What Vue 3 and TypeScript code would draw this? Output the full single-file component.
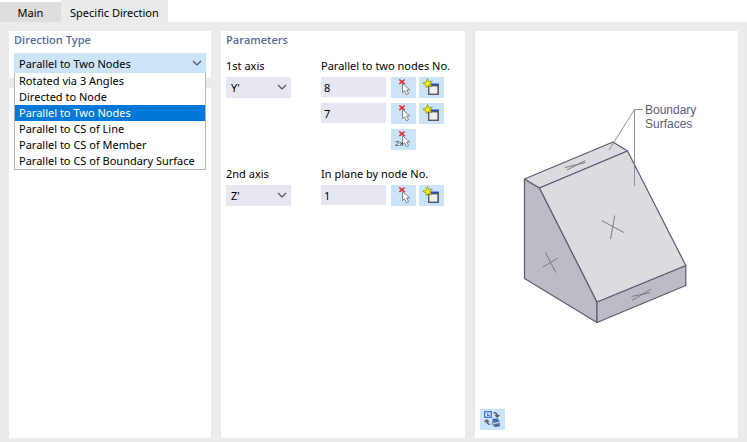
<script setup lang="ts">
import { ref } from 'vue'

interface NodeField {
  id: string
  label: string
  value: string
}

const tabs = ['Main', 'Specific Direction']
const activeTab = ref('Specific Direction')

const directionTypes = [
  'Rotated via 3 Angles',
  'Directed to Node',
  'Parallel to Two Nodes',
  'Parallel to CS of Line',
  'Parallel to CS of Member',
  'Parallel to CS of Boundary Surface',
]
const directionType = ref('Parallel to Two Nodes')
const listOpen = ref(true)

const axes = ["X'", "Y'", "Z'"]
const firstAxis = ref("Y'")
const secondAxis = ref("Z'")

const parallelNodes = ref<NodeField[]>([
  { id: 'node-a', label: 'First node', value: '8' },
  { id: 'node-b', label: 'Second node', value: '7' },
])
const planeNode = ref('1')

function choose(type: string) {
  directionType.value = type
  listOpen.value = false
}
</script>

<template>
  <svg class="symbols" width="0" height="0" aria-hidden="true">
    <symbol id="icon-pick" viewBox="0 0 25 21">
      <path d="M8.3 2.5L13.7 7M13.7 2.5L8.3 7" stroke="#ee1c24" stroke-width="1.5" fill="none" />
      <path d="M11.5 6.5V15.5L13.6 13.7L15.5 17.8L17.6 16.8L15.7 12.9H18.8Z" fill="#fff" stroke="#77777c" stroke-width=".9" />
    </symbol>
    <symbol id="icon-new" viewBox="0 0 25 21">
      <path d="M10 7.5H20" stroke="#2846dc" stroke-width="2" />
      <rect x="9.7" y="8.7" width="9.6" height="8.6" fill="#efefef" stroke="#5a5a5a" stroke-width="1.4" />
      <path d="M19.3 7V17" stroke="#5a5a5a" stroke-width="1.4" />
      <path d="M8.5 1.5L9.6 4.7L13.3 4.1L11 6.6L12.8 9.8L9.4 8.6L7.2 11L6.9 7.7L3.8 6.3L7.1 5.2Z" fill="#f8f000" stroke="#85852c" stroke-width=".7" />
    </symbol>
    <symbol id="icon-chevron" viewBox="0 0 10 6">
      <path d="M1 1L5 5L9 1" fill="none" stroke="#50505a" stroke-width="1.2" />
    </symbol>
  </svg>

  <div class="dialog">
    <div class="tabs" role="tablist">
      <button
        v-for="tab in tabs"
        :key="tab"
        type="button"
        role="tab"
        class="tab"
        :class="{ active: tab === activeTab }"
        :aria-selected="tab === activeTab"
        @click="activeTab = tab"
      >{{ tab }}</button>
    </div>

    <main class="content">
      <div class="column">
        <section class="panel type-panel">
          <h2><label for="direction-type">Direction Type</label></h2>
          <div class="combo">
            <div class="select wide">
              <select id="direction-type" v-model="directionType" @mousedown.prevent="listOpen = !listOpen">
                <option v-for="type in directionTypes" :key="type">{{ type }}</option>
              </select>
              <svg class="chevron"><use href="#icon-chevron" /></svg>
            </div>
            <ul v-if="listOpen" class="options" role="listbox" aria-label="Direction Type">
              <li
                v-for="type in directionTypes"
                :key="type"
                role="option"
                :aria-selected="type === directionType"
                :class="{ selected: type === directionType }"
                @click="choose(type)"
              >{{ type }}</li>
            </ul>
          </div>
        </section>
        <section class="panel grow"></section>
      </div>

      <section class="panel">
        <h2>Parameters</h2>
        <div class="group">
          <div class="axis">
            <label for="first-axis">1st axis</label>
            <div class="select">
              <select id="first-axis" v-model="firstAxis">
                <option v-for="axis in axes" :key="axis">{{ axis }}</option>
              </select>
              <svg class="chevron"><use href="#icon-chevron" /></svg>
            </div>
          </div>
          <div class="nodes">
            <label for="node-a">Parallel to two nodes No.</label>
            <div class="rows">
              <div v-for="node in parallelNodes" :key="node.id" class="row">
                <input :id="node.id" v-model="node.value" type="text" :aria-label="node.label" />
                <button type="button" class="tool" aria-label="Pick node"><svg><use href="#icon-pick" /></svg></button>
                <button type="button" class="tool" aria-label="New node"><svg><use href="#icon-new" /></svg></button>
              </div>
              <div class="row">
                <span class="spacer"></span>
                <button type="button" class="tool" aria-label="Pick two nodes">
                  <svg viewBox="0 0 25 21">
                    <use href="#icon-pick" width="25" height="21" />
                    <text x="4" y="17" class="twice">2x</text>
                  </svg>
                </button>
              </div>
            </div>
          </div>
        </div>
        <div class="group">
          <div class="axis">
            <label for="second-axis">2nd axis</label>
            <div class="select">
              <select id="second-axis" v-model="secondAxis">
                <option v-for="axis in axes" :key="axis">{{ axis }}</option>
              </select>
              <svg class="chevron"><use href="#icon-chevron" /></svg>
            </div>
          </div>
          <div class="nodes">
            <label for="plane-node">In plane by node No.</label>
            <div class="row">
              <input id="plane-node" v-model="planeNode" type="text" />
              <button type="button" class="tool" aria-label="Pick node"><svg><use href="#icon-pick" /></svg></button>
              <button type="button" class="tool" aria-label="New node"><svg><use href="#icon-new" /></svg></button>
            </div>
          </div>
        </div>
      </section>

      <section class="panel preview">
        <svg class="drawing" viewBox="475 31 263 378" role="img" aria-label="Boundary surfaces of a solid">
          <g stroke="#5c5c73" stroke-width="1.2" stroke-linejoin="round">
            <path d="M524.5 179L539.5 188L597 302L597 322.5L524.5 278.5Z" fill="#bcbcc6" />
            <path d="M597 302L685.8 265.5V285.5L597 322.5Z" fill="#bcbcc6" />
            <path d="M524.5 179L613 142L627.5 151L539.5 188Z" fill="#dbdbe0" />
            <path d="M539.5 188L627.5 151L685.8 265.5L597 302Z" fill="#dbdbe0" />
          </g>
          <g fill="none" stroke="#72727e" stroke-width=".9">
            <path d="M601.5 220.5L624 232.5M614.8 215.5L610.5 239" />
            <path d="M545.5 252.5L555.8 272.5M543 267L558 258" />
            <path d="M565 167.5L585.5 162.5M567 170L585.5 160.5" />
            <path d="M631.5 296.5L650.5 292.5M632 300.5L651 289" />
            <path d="M609 150L634.5 109.5H643M634.5 109.5V186" stroke="#85858f" />
          </g>
          <text x="645" y="114" class="callout">Boundary</text>
          <text x="645" y="128" class="callout">Surfaces</text>
        </svg>
        <div class="footer">
          <button type="button" class="tool" aria-label="Switch preview">
            <svg viewBox="0 0 25 21">
              <rect x="4.7" y="2.7" width="6.6" height="5.6" fill="#e4eeff" stroke="#4878e8" stroke-width="1.4" />
              <path d="M7 4.2V7H9.8V5.7H8.3V4.2Z" fill="#4878e8" />
              <path d="M13.5 3.8Q17.3 3.4 17.3 7.5M15.2 6L17.3 8L19.4 6" fill="none" stroke="#555b63" stroke-width="1.3" />
              <path d="M10 15.3Q6.7 15.3 6.7 11.5M4.6 13L6.7 11L8.8 13" fill="none" stroke="#555b63" stroke-width="1.3" />
              <path d="M12.5 9.5L18 10L20 12.5V17L14.5 18L11.5 15.5Z" fill="#8299c4" />
              <path d="M12.5 10L17.8 9.6L18.8 12.8L13.8 13.8Z" fill="#456bb5" />
              <path d="M14.5 15.3L19.7 14.3V17.2L14.5 18Z" fill="#4b6799" />
              <path d="M13 14.5L19.8 13.4" stroke="#c9d8ee" />
            </svg>
          </button>
        </div>
      </section>
    </main>
  </div>
</template>

<style>
body {
  margin: 0;
}
</style>

<style scoped>
.symbols {
  position: absolute;
}
.dialog {
  display: flex;
  flex-direction: column;
  min-height: 100vh;
  background: #fff;
  color: #000;
  font: 11px/16px "Noto Sans", "Open Sans", sans-serif;
}
.tabs {
  display: flex;
  align-items: flex-end;
  height: 22px;
}
button,
input,
select {
  margin: 0;
  border: 0;
  border-radius: 0;
  font: inherit;
  color: inherit;
}
.tab {
  min-width: 61px;
  height: 20px;
  padding: 2px 9px 0;
  background: #dedede;
}
.tab.active {
  height: 22px;
  padding-top: 4px;
  background: #ebebeb;
}
.content {
  flex: 1;
  display: grid;
  grid-template-columns: 202fr 244fr 263fr;
  gap: 10px;
  padding: 9px 9px 8px;
  background: #ebebeb;
}
.column {
  display: flex;
  flex-direction: column;
  gap: 10px;
  min-width: 0;
}
.panel {
  box-sizing: border-box;
  min-width: 0;
  padding: 1px 5px 5px;
  background: #fff;
}
.grow {
  flex: 1;
}
h2 {
  margin: 0;
  font: 600 11px/16px "Open Sans", "Noto Sans", sans-serif;
  color: #5b6b97;
}
.combo {
  position: relative;
  margin-top: 5px;
}
.select {
  position: relative;
  width: 65px;
  height: 21px;
}
.select select {
  display: block;
  width: 100%;
  height: 100%;
  padding: 1px 20px 0 5px;
  appearance: none;
  background: #e7e7f2;
}
.select.wide {
  width: 100%;
  height: 20px;
}
.select.wide select {
  padding-top: 2px;
  background: #cce4f7;
}
.chevron {
  position: absolute;
  top: 7px;
  right: 4px;
  width: 10px;
  height: 6px;
  pointer-events: none;
}
.options {
  position: absolute;
  z-index: 1;
  top: 100%;
  left: 0;
  right: 0;
  margin: 0;
  padding: 0;
  border: 1px solid #b4b4b4;
  border-top: 0;
  list-style: none;
  background: #fff;
}
.options li {
  padding: 0 4px;
  white-space: nowrap;
}
.options .selected {
  background: #0078d7;
  color: #fff;
}
.group {
  display: flex;
  gap: 30px;
  margin-top: 10px;
}
.group + .group {
  margin-top: 16px;
}
.group label {
  display: block;
  margin-bottom: 3px;
  white-space: nowrap;
}
.axis {
  width: 65px;
}
.rows {
  display: grid;
  gap: 5px;
}
.row {
  display: flex;
  gap: 3px;
}
.row input,
.spacer {
  box-sizing: border-box;
  width: 65px;
  height: 20px;
  margin-right: 2px;
  padding: 1px 3px 0;
}
.row input {
  background: #e7e7f2;
}
.tool {
  width: 25px;
  height: 21px;
  padding: 0;
  background: #cce4f7;
}
.tool svg {
  display: block;
  width: 25px;
  height: 21px;
}
.twice {
  font: 8px "Liberation Sans", sans-serif;
  fill: #333;
}
.preview {
  display: flex;
  flex-direction: column;
  padding: 0 0 4px;
}
.drawing {
  flex: 1;
  width: 100%;
  min-height: 0;
}
.callout {
  font: 12px "Liberation Sans", sans-serif;
  fill: #5c5c73;
}
.footer {
  padding-left: 5px;
}
</style>
